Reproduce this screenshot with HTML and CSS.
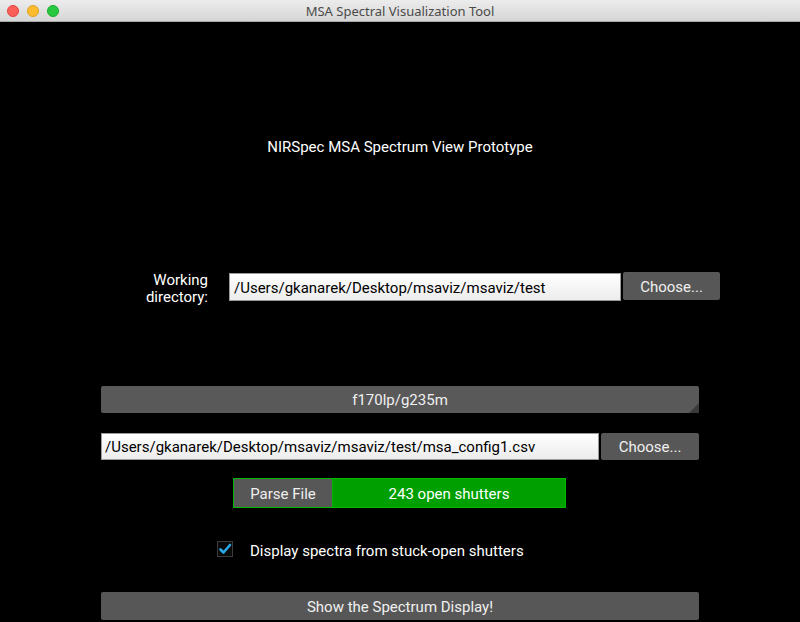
FILE: index.html
```html
<!DOCTYPE html>
<html>
<head>
<meta charset="utf-8">
<link rel="stylesheet" href="styles.css">
</head>
<body>
<div class="window">
  <div class="titlebar">
    <div class="lights">
      <span class="light red"></span>
      <span class="light yellow"></span>
      <span class="light green"></span>
    </div>
    <div class="wintitle">MSA Spectral Visualization Tool</div>
  </div>
  <div class="content">
    <div class="heading">NIRSpec MSA Spectrum View Prototype</div>
    <div class="workdir">
      <div class="label">Working<br>directory:</div>
      <div class="input wd-input">/Users/gkanarek/Desktop/msaviz/msaviz/test</div>
      <div class="btn wd-btn">Choose...</div>
    </div>
    <div class="combo">f170lp/g235m<span class="corner"></span></div>
    <div class="filerow">
      <div class="input file-input">/Users/gkanarek/Desktop/msaviz/msaviz/test/msa_config1.csv</div>
      <div class="btn file-btn">Choose...</div>
    </div>
    <div class="parserow">
      <div class="parse">
        <div class="btn parse-btn">Parse File</div>
        <div class="status">243 open shutters</div>
      </div>
    </div>
    <div class="checkrow">
      <span class="checkbox">
        <svg width="14" height="14" viewBox="0 0 14 14"><path d="M2.5 7.5 L5.5 10.5 L12 3" fill="none" stroke="#29a9e6" stroke-width="2.6" stroke-linecap="round" stroke-linejoin="round"/></svg>
      </span>
      <span class="checklabel">Display spectra from stuck-open shutters</span>
    </div>
    <div class="btn showbtn">Show the Spectrum Display!</div>
  </div>
</div>
</body>
</html>
```
FILE: styles.css
```css
html, body {
  margin: 0;
  padding: 0;
  background: #000;
}
.window {
  width: 800px;
  height: 622px;
  overflow: hidden;
  background: #000;
  font-family: Roboto, "Liberation Sans", sans-serif;
  color: #fff;
}
.titlebar {
  height: 21px;
  border-bottom: 1px solid #a9a9a9;
  background: linear-gradient(#ececec, #d6d6d6);
  display: flex;
  align-items: center;
  position: relative;
}
.lights {
  display: flex;
  gap: 8px;
  padding-left: 7px;
}
.light {
  width: 12px;
  height: 12px;
  border-radius: 50%;
  box-sizing: border-box;
}
.red { background: #fc5f57; border: 1px solid #e0443e; }
.yellow { background: #fdbc2e; border: 1px solid #dea123; }
.green { background: #28c840; border: 1px solid #1aab29; }
.wintitle {
  position: absolute;
  left: 0;
  right: 0;
  top: 0;
  line-height: 22px;
  text-align: center;
  font-family: "Noto Sans", "Liberation Sans", sans-serif;
  font-size: 13px;
  color: #4a4a4a;
}
.content {
  display: flex;
  flex-direction: column;
}
.heading {
  margin-top: 115px;
  height: 20px;
  line-height: 20px;
  text-align: center;
  font-size: 15px;
  padding-left: 0;
}
.workdir {
  margin-top: 115px;
  display: flex;
  align-items: center;
  height: 29px;
  padding-left: 140px;
}
.label {
  width: 68px;
  text-align: right;
  font-size: 15px;
  line-height: 17px;
  color: #fff;
  margin-right: 21px;
  padding-top: 4px;
}
.input {
  box-sizing: border-box;
  background: linear-gradient(#ffffff, #ececec);
  border: 1px solid #9a9a9a;
  color: #000;
  font-size: 15px;
  display: flex;
  align-items: center;
  padding-left: 4px;
  padding-top: 1px;
  white-space: nowrap;
  overflow: hidden;
}
.wd-input {
  width: 392px;
  height: 28px;
  margin-top: 1px;
}
.btn {
  box-sizing: border-box;
  background: #575757;
  color: #f0f0f0;
  font-size: 15px;
  display: flex;
  align-items: center;
  justify-content: center;
  border-radius: 2px;
  padding-top: 1px;
}
.wd-btn {
  width: 97px;
  height: 28px;
  margin-left: 2px;
  margin-top: -1px;
  padding-top: 2px;
}
.combo {
  margin-top: 85px;
  margin-left: 101px;
  width: 598px;
  height: 27px;
  background: #595959;
  border-radius: 2px;
  display: flex;
  align-items: center;
  justify-content: center;
  font-size: 15px;
  color: #f0f0f0;
  position: relative;
  padding-top: 1px;
  box-sizing: border-box;
}
.corner {
  position: absolute;
  right: 0;
  bottom: 0;
  width: 0;
  height: 0;
  border-left: 10px solid transparent;
  border-bottom: 10px solid #3a3a3a;
}
.filerow {
  margin-top: 20px;
  margin-left: 101px;
  display: flex;
  height: 27px;
}
.file-input {
  width: 498px;
  height: 27px;
  padding-left: 3px;
}
.file-btn {
  width: 98px;
  height: 27px;
  margin-left: 2px;
}
.parserow {
  margin-top: 18px;
  display: flex;
  padding-left: 233px;
}
.parse {
  width: 333px;
  height: 30px;
  box-sizing: border-box;
  background: #009f00;
  border: 1px solid #00b800;
  display: flex;
}
.parse-btn {
  width: 99px;
  height: 28px;
  border-radius: 0;
  border-right: 1px solid #00b800;
  padding-top: 2px;
}
.status {
  flex: 1;
  display: flex;
  align-items: center;
  justify-content: center;
  font-size: 15px;
  color: #fff;
  padding-top: 2px;
}
.checkrow {
  margin-top: 33px;
  display: flex;
  align-items: center;
  padding-left: 217px;
  height: 16px;
}
.checkbox {
  width: 16px;
  height: 16px;
  box-sizing: border-box;
  border: 1px solid #3c3c3c;
  background: #0a0a0a;
  display: flex;
  align-items: center;
  justify-content: center;
}
.checklabel {
  margin-left: 17px;
  font-size: 15px;
  color: #fff;
  padding-top: 4px;
}
.showbtn {
  margin-top: 35px;
  margin-left: 101px;
  width: 598px;
  height: 28px;
  padding-top: 2px;
}
```
